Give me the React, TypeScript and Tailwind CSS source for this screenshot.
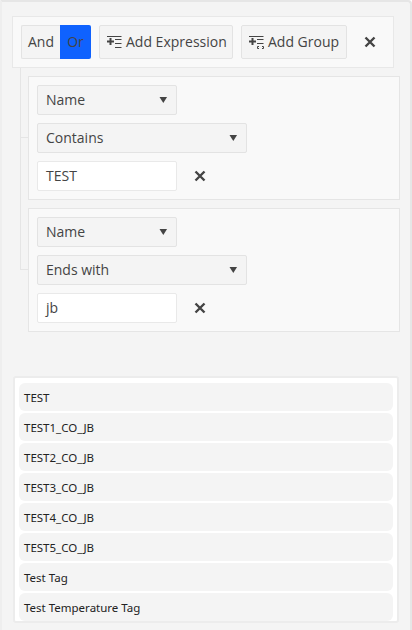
import React from 'react';

const font = "font-['Open_Sans',sans-serif]";

const Caret = () => (
  <svg width="10" height="6" viewBox="0 0 10 6" className="shrink-0">
    <path d="M1.500 0h7.600L5.300 6z" fill="#444" />
  </svg>
);

const Close = () => (
  <svg width="12" height="12" viewBox="0 0 12 12">
    <path d="M1.500 1.500l9 9M10.500 1.500l-9 9" stroke="#444" strokeWidth="2.400" />
  </svg>
);

const AddExpressionIcon = () => (
  <svg width="15" height="14" viewBox="0 0 15 14" className="shrink-0">
    <path d="M0 1.500h14.500M8 4.500h6.500M8 8.500h6.500M8 12.500h6.500" stroke="#444" strokeWidth="1" />
    <path d="M0 6.500h7M3.500 3v7" stroke="#444" strokeWidth="2" />
  </svg>
);

const AddGroupIcon = () => (
  <svg width="15" height="14" viewBox="0 0 15 14" className="shrink-0">
    <path d="M0 1.500h14.500M8 4.500h6.500M8 8.500h6.500" stroke="#444" strokeWidth="1" />
    <path d="M0 6.500h7M3.500 3v7" stroke="#444" strokeWidth="2" />
    <path d="M10 11.500H8.500v2H10M13 11.500h1.500v2H13" fill="none" stroke="#444" strokeWidth="1" />
  </svg>
);

const Select = ({ label, wide }: { label: string; wide?: boolean }) => (
  <div className={`flex h-[30px] items-center justify-between rounded-[2px] border border-[#e3e3e3] bg-[#f4f4f4] pl-[8px] pr-[8px] text-[14px] text-[#444] ${wide ? 'w-[210px]' : 'w-[140px]'}`}>
    <span className="pb-[2px]">{label}</span>
    <Caret />
  </div>
);

const Rule = ({ field, op, value }: { field: string; op: string; value: string }) => (
  <div className="ml-[16px] flex w-[372px] flex-col gap-[8px] border border-[#e5e5e5] bg-[#f9f9f9] p-[8px]">
    <Select label={field} />
    <Select label={op} wide />
    <div className="flex items-center">
      <div className="flex h-[30px] w-[140px] items-center rounded-[2px] border border-[#e9e9e9] bg-white pb-[2px] pl-[8px] text-[14px] text-[#444]">
        {value}
      </div>
      <span className="ml-[17px] flex"><Close /></span>
    </div>
  </div>
);

const items = ['TEST', 'TEST1_CO_JB', 'TEST2_CO_JB', 'TEST3_CO_JB', 'TEST4_CO_JB', 'TEST5_CO_JB', 'Test Tag', 'Test Temperature Tag'];

export default function App() {
  return (
    <div className={`${font} h-[630px] w-[412px] overflow-hidden bg-white`}>
      <div className="h-full overflow-hidden rounded-tr-[4px] border-x-2 border-t-2 border-[#e6e6e6] border-l-[#eeeeee] bg-[#f4f4f4] pl-[10px] pt-[14px]">
        {/* query builder */}
        <div className="relative w-[382px]">
          <div className="flex h-[52px] items-center border border-[#e8e8e8] bg-[#f9f9f9] pl-[8px] text-[14px] text-[#444]">
            <div className="flex">
              <span className="flex h-[34px] w-[39px] items-center rounded-l-[2px] border border-r-0 border-[#e3e3e3] bg-[#f4f4f4] pb-[2px] pl-[6px]">And</span>
              <span className="flex h-[34px] w-[31px] items-center justify-center rounded-r-[2px] bg-[#0f62fe] pb-[2px]">Or</span>
            </div>
            <div className="ml-[8px] flex h-[34px] w-[134px] items-center gap-[4px] rounded-[2px] border border-[#e3e3e3] bg-[#f4f4f4] pl-[7px]">
              <AddExpressionIcon />
              <span className="pb-[2px]">Add Expression</span>
            </div>
            <div className="ml-[8px] flex h-[34px] w-[106px] items-center gap-[4px] rounded-[2px] border border-[#e3e3e3] bg-[#f4f4f4] pl-[7px]">
              <AddGroupIcon />
              <span className="pb-[2px]">Add Group</span>
            </div>
            <span className="ml-[17px] flex"><Close /></span>
          </div>

          {/* tree lines */}
          <div className="absolute left-[8px] top-[52px] h-[202px] w-[8px] border-b border-l border-[#e5e5e5]" />
          <div className="absolute left-[8px] top-[121px] h-px w-[8px] bg-[#e5e5e5]" />

          <div className="mt-[8px] flex flex-col gap-[8px]">
            <Rule field="Name" op="Contains" value="TEST" />
            <Rule field="Name" op="Ends with" value="jb" />
          </div>
        </div>

        {/* results */}
        <div className="ml-px mt-[44px] flex w-[386px] flex-col gap-[2px] rounded-[3px] border-2 border-[#ececec] bg-white px-[4px] pt-[5px]">
          {items.map((item) => (
            <div key={item} className="flex h-[28px] items-center rounded-[6px] bg-[#f4f4f4] pl-[5px] pt-[2px] font-['Noto_Sans',sans-serif] text-[11.5px] font-normal text-[#222]">
              {item}
            </div>
          ))}
        </div>
      </div>
    </div>
  );
}
